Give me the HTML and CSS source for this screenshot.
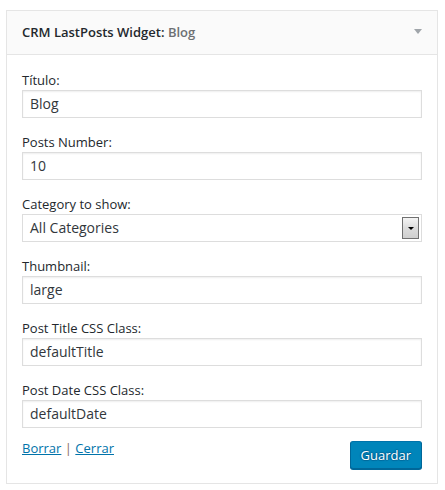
FILE: index.html
```html
<!DOCTYPE html>
<html lang="es">
<head>
<meta charset="utf-8">
<title>CRM LastPosts Widget</title>
<link rel="stylesheet" href="styles.css">
</head>
<body>
<div class="widget">
  <div class="widget-top">
    <h3 class="widget-title">CRM LastPosts Widget<span class="colon">:</span> <span class="in-title">Blog</span></h3>
    <svg class="toggle" width="8" height="5" viewBox="0 0 8 5"><path d="M0 0H8L4 5Z" fill="#a0a5aa"/></svg>
  </div>
  <div class="widget-inside">
    <div class="fields">
      <div class="field">
        <label class="label">Título:</label>
        <div class="input">Blog</div>
      </div>
      <div class="field">
        <label class="label">Posts Number:</label>
        <div class="input">10</div>
      </div>
      <div class="field">
        <label class="label">Category to show:</label>
        <div class="input select">
          <span class="select-text">All Categories</span>
          <span class="select-btn"><svg width="6" height="3" viewBox="0 0 6 3"><path d="M0 0H6L3 3Z" fill="#000"/></svg></span>
        </div>
      </div>
      <div class="field">
        <label class="label">Thumbnail:</label>
        <div class="input">large</div>
      </div>
      <div class="field">
        <label class="label">Post Title CSS Class:</label>
        <div class="input">defaultTitle</div>
      </div>
      <div class="field">
        <label class="label">Post Date CSS Class:</label>
        <div class="input">defaultDate</div>
      </div>
    </div>
    <div class="footer">
      <div class="links"><a href="#" class="link">Borrar</a> <span class="sep">|</span> <a href="#" class="link">Cerrar</a></div>
      <button class="button-primary">Guardar</button>
    </div>
  </div>
</div>
</body>
</html>
```
FILE: styles.css
```css
html, body {
  margin: 0;
  padding: 0;
  background: #fff;
}
body {
  font-family: "Open Sans", "Noto Sans", sans-serif;
  font-size: 13px;
  color: #444;
  padding: 10px 0 0 6px;
}
.widget {
  width: 432px;
  box-sizing: border-box;
  border: 1px solid #e5e5e5;
  background: #fff;
}
.widget-top {
  display: flex;
  align-items: center;
  justify-content: space-between;
  background: #fafafa;
  border-bottom: 1px solid #e5e5e5;
}
.widget-title {
  margin: 0;
  padding: 15px;
  font-size: 13px;
  line-height: 13px;
  font-weight: 600;
  color: #23282d;
  white-space: nowrap;
}
.in-title {
  color: #6d7073;
}
.toggle {
  display: block;
  margin-right: 15px;
  margin-top: -3px;
}
.widget-inside {
  padding: 16px 15px 14px;
}
.fields {
  display: flex;
  flex-direction: column;
  gap: 15px;
}
.label {
  display: block;
  line-height: 19px;
  color: #23282d;
}
.input {
  box-sizing: border-box;
  height: 28px;
  border: 1px solid #ddd;
  box-shadow: inset 0 1px 2px rgba(0,0,0,.07);
  padding: 0 7px;
  font-size: 14px;
  line-height: 26px;
  color: #32373c;
  background: #fff;
}
.select {
  display: flex;
  align-items: center;
  justify-content: space-between;
  padding-right: 2px;
  box-shadow: none;
}
.select-btn {
  box-sizing: border-box;
  width: 17px;
  height: 22px;
  border: 1px solid #707070;
  background: linear-gradient(#f4f4f4, #dcdcdc 50%, #cfcfcf);
  display: flex;
  align-items: center;
  justify-content: center;
}
.select-btn svg {
  display: block;
  margin-top: 1px;
}
.footer {
  margin-top: 11px;
  display: flex;
  justify-content: space-between;
  align-items: flex-start;
}
.links {
  line-height: 18px;
  color: #72777c;
}
.link {
  color: #0073aa;
  text-decoration: underline;
}
.sep {
  color: #8a6d5a;
}
.button-primary {
  margin-top: 2px;
  box-sizing: border-box;
  height: 28px;
  padding: 0 10px 1px;
  font-family: "Open Sans", "Noto Sans", sans-serif;
  font-size: 13px;
  line-height: 26px;
  color: #fff;
  background: #0085ba;
  border: 1px solid;
  border-color: #0073aa #006799 #006799;
  border-radius: 3px;
  box-shadow: 0 1px 0 #006799;
  text-shadow: 0 -1px 1px #006799, 1px 0 1px #006799, 0 1px 1px #006799, -1px 0 1px #006799;
  cursor: pointer;
}
```
